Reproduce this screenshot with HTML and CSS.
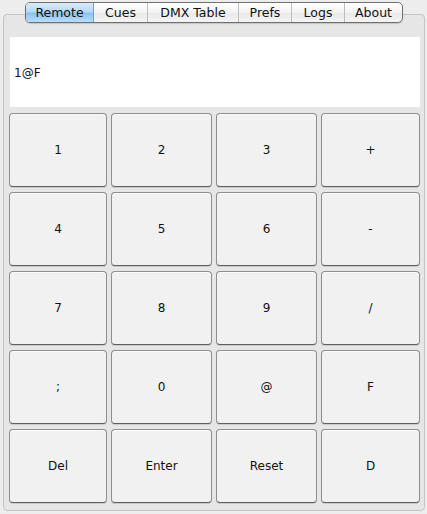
FILE: index.html
```html
<!DOCTYPE html>
<html>
<head>
<meta charset="utf-8">
<link rel="stylesheet" href="styles.css">
</head>
<body>
<div class="app">
  <div class="tabs">
    <div class="tab sel t-remote">Remote</div>
    <div class="tab t-cues">Cues</div>
    <div class="tab t-dmx">DMX Table</div>
    <div class="tab t-prefs">Prefs</div>
    <div class="tab t-logs">Logs</div>
    <div class="tab t-about">About</div>
  </div>
  <div class="panel">
    <div class="field">1@F</div>
    <div class="keys">
      <div class="key">1</div><div class="key">2</div><div class="key">3</div><div class="key">+</div>
      <div class="key">4</div><div class="key">5</div><div class="key">6</div><div class="key">-</div>
      <div class="key">7</div><div class="key">8</div><div class="key">9</div><div class="key">/</div>
      <div class="key">;</div><div class="key">0</div><div class="key">@</div><div class="key">F</div>
      <div class="key">Del</div><div class="key">Enter</div><div class="key">Reset</div><div class="key">D</div>
    </div>
  </div>
</div>
</body>
</html>
```

FILE: styles.css
```css
html, body {
  margin: 0;
  padding: 0;
  background: #ededed;
  font-family: "DejaVu Sans", "Liberation Sans", sans-serif;
  color: #111;
}
.app {
  width: 427px;
  height: 514px;
  padding-top: 2px;
  box-sizing: border-box;
}
.tabs {
  position: relative;
  z-index: 2;
  display: flex;
  margin-left: 25px;
  width: 378px;
  height: 21px;
  box-sizing: border-box;
  border: 1px solid #6f6f6f;
  border-radius: 5px;
  background: linear-gradient(#ffffff, #f3f3f3 50%, #e9e9e9 51%, #f4f4f4);
  overflow: hidden;
  box-shadow: 0 1px 1px rgba(0,0,0,0.15);
}
.tab {
  display: flex;
  align-items: center;
  justify-content: center;
  font-size: 12.5px;
  color: #111;
  border-left: 1px solid #bdbdbd;
  box-sizing: border-box;
  height: 100%;
}
.tab:first-child { border-left: none; }
.tab.sel {
  background: linear-gradient(#d9ecfc, #b6d9f8 45%, #8cc3f2 55%, #b9ddfb);
  border-right: 1px solid #7d9ab8;
}
.tab.sel + .tab { border-left: none; }
.t-remote { width: 68px; }
.t-cues { width: 53px; }
.t-dmx { width: 91px; }
.t-prefs { width: 53px; }
.t-logs { width: 53px; }
.t-about { flex: 1; }
.panel {
  margin: -9px 2px 0 3px;
  height: 497px;
  box-sizing: border-box;
  border: 1px solid #c4c4c4;
  border-radius: 4px;
  background: #e6e6e6;
  padding: 22px 4px 7px 5px;
  display: flex;
  flex-direction: column;
}
.field {
  margin-left: 1px;
  height: 70px;
  background: #ffffff;
  box-sizing: border-box;
  display: flex;
  align-items: center;
  padding-left: 4px;
  padding-top: 2px;
  font-size: 12px;
  margin-bottom: 6px;
}
.keys {
  display: grid;
  grid-template-columns: 98px 101px 101px 1fr;
  grid-auto-rows: 74px;
  column-gap: 4px;
  row-gap: 5px;
}
.key {
  display: flex;
  align-items: center;
  justify-content: center;
  font-size: 12px;
  background: #f1f1f1;
  border: 1px solid #8e8e8e;
  border-bottom-color: #5f5f5f;
  border-radius: 4px;
  box-shadow: 0 1px 0 rgba(0,0,0,0.12), inset 0 1px 0 #fbfbfb;
  box-sizing: border-box;
}
```
